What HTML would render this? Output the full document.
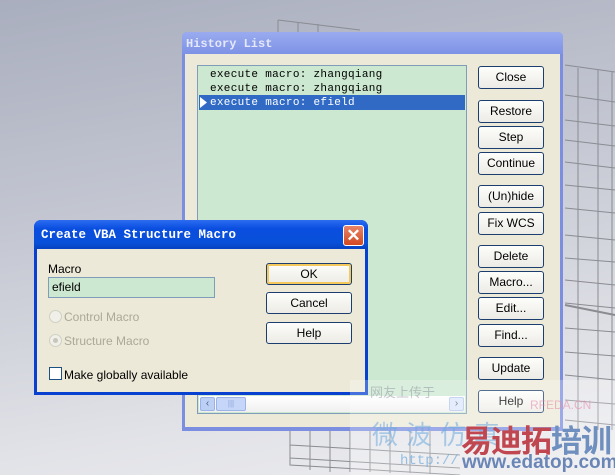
<!DOCTYPE html>
<html><head><style>
*{margin:0;padding:0;box-sizing:border-box}
body{width:615px;height:475px;overflow:hidden;position:relative;background:linear-gradient(170deg,#a9aebe 0%,#c4c7d2 40%,#e2e3e8 80%,#ececef 100%);font-family:"Liberation Sans",sans-serif;font-size:12px}
.abs{position:absolute}
.btn{position:absolute;width:66px;height:23px;border:1px solid #1c3e6e;border-radius:3px;background:linear-gradient(#fdfdfb,#ecebe5);text-align:center;line-height:21px;font-size:12px;color:#000}
.mono{font-family:"Liberation Mono",monospace;font-size:11px;letter-spacing:.3px}
</style></head><body>
<svg class="abs" style="left:0;top:0" width="615" height="475">
<g stroke="#8a8c92" stroke-width="1" fill="none">
<path d="M278 20 L360 30 M278 20 V32 M298 22 V32 M318 24 V32 M565 65 L615 72 M565 95 L615 102 M565 120 L615 126 M565 140 L615 146 M565 162 L615 168 M565 185 L615 190 M565 208 L615 213 M565 235 L615 240 M565 258 L615 262 M565 280 L615 285 M565 303 L615 308 M565 328 L615 332 M565 352 L615 356 M565 375 L615 380 M565 400 L615 404 M565 420 L615 425"/>
<path d="M578 68 V430 M598 70 V430 M612 72 V430"/>
<path d="M290 430 V465 L460 475 M310 430 V470 M330 430 V472 M350 430 V472 M370 430 V472 M390 430 V473 M410 430 V473 M430 430 V474 M290 445 L460 455 M290 458 L460 468"/>
<path d="M565 305 L615 315" stroke-width="2"/>
</g></svg>

<div class="abs" style="left:182px;top:32px;width:381px;height:399px;background:#7b8ee0;border-radius:5px 5px 0 0"></div>
<div class="abs" style="left:182px;top:32px;width:381px;height:22px;background:linear-gradient(#9aabef,#7e92e6);border-radius:5px 5px 0 0"></div>
<div class="abs" style="left:186px;top:37px;color:#e4e8f8;font-weight:bold;font-family:'Liberation Mono',monospace;font-size:12px">History List</div>
<div class="abs" style="left:185px;top:54px;width:375px;height:373px;background:#ece9d8"></div>
<div class="abs" style="left:197px;top:65px;width:270px;height:349px;background:#cce8d0;border:1px solid #7f9db9"></div>
<div class="abs mono" style="left:210px;top:69px;color:#000">execute macro: zhangqiang</div>
<div class="abs mono" style="left:210px;top:83px;color:#000">execute macro: zhangqiang</div>
<div class="abs" style="left:199px;top:95px;width:266px;height:15px;background:#316ac5"></div>
<svg class="abs" style="left:200px;top:97px" width="8" height="11"><path d="M0 0 L7 5.5 L0 11Z" fill="#fff"/></svg>
<div class="abs mono" style="left:210px;top:97px;color:#fff">execute macro: efield</div>
<div class="abs" style="left:199px;top:396px;width:266px;height:16px;background:linear-gradient(#fff,#f0f0f0)"></div>
<div class="abs" style="left:200px;top:397px;width:15px;height:14px;background:#bcd0f6;border:1px solid #9bb3e6;border-radius:2px;color:#4d6185;font-size:10px;text-align:center;line-height:12px">‹</div>
<div class="abs" style="left:216px;top:397px;width:30px;height:14px;background:#c6d6f8;border:1px solid #9bb3e6;border-radius:2px;color:#8ea4d6;font-size:8px;text-align:center;line-height:12px">|||</div>
<div class="abs" style="left:449px;top:397px;width:15px;height:14px;background:#dce6fa;border:1px solid #b5c6ee;border-radius:2px;color:#4d6185;font-size:10px;text-align:center;line-height:12px">›</div>

<div class="btn" style="left:478px;top:66px">Close</div>
<div class="btn" style="left:478px;top:100px">Restore</div>
<div class="btn" style="left:478px;top:126px">Step</div>
<div class="btn" style="left:478px;top:152px">Continue</div>
<div class="btn" style="left:478px;top:185px">(Un)hide</div>
<div class="btn" style="left:478px;top:212px">Fix WCS</div>
<div class="btn" style="left:478px;top:245px">Delete</div>
<div class="btn" style="left:478px;top:271px">Macro...</div>
<div class="btn" style="left:478px;top:297px">Edit...</div>
<div class="btn" style="left:478px;top:324px">Find...</div>
<div class="btn" style="left:478px;top:357px">Update</div>
<div class="btn" style="left:478px;top:390px">Help</div>

<div class="abs" style="left:34px;top:220px;width:334px;height:175px;background:#0841d0;border-radius:7px 7px 0 0"></div>
<div class="abs" style="left:34px;top:220px;width:334px;height:29px;background:linear-gradient(#2c6cf0,#0a4ee0 30%,#0850d8 80%,#0640c0);border-radius:7px 7px 0 0"></div>
<div class="abs" style="left:41px;top:228px;color:#fff;font-weight:bold;font-family:'Liberation Mono',monospace;font-size:12.5px">Create VBA Structure Macro</div>
<div class="abs" style="left:343px;top:225px;width:21px;height:21px;background:linear-gradient(#e8846a,#d24820);border:1px solid #fff;border-radius:3px;color:#fff;text-align:center;line-height:19px;font-size:17px;font-weight:bold">✕</div>
<div class="abs" style="left:37px;top:249px;width:328px;height:143px;background:#ece9d8"></div>
<div class="abs" style="left:48px;top:262px;font-size:12px">Macro</div>
<div class="abs" style="left:48px;top:277px;width:167px;height:21px;background:#cce8d0;border:1px solid #7f9db9;padding-left:3px;line-height:19px">efield</div>
<div class="abs" style="left:49px;top:310px;width:13px;height:13px;border:1px solid #d0cfc4;border-radius:50%;background:#f0efe8"></div>
<div class="abs" style="left:64px;top:310px;color:#aca899">Control Macro</div>
<div class="abs" style="left:49px;top:334px;width:13px;height:13px;border:1px solid #d0cfc4;border-radius:50%;background:#f0efe8"></div>
<div class="abs" style="left:53px;top:338px;width:5px;height:5px;border-radius:50%;background:#c8c6bb"></div>
<div class="abs" style="left:64px;top:334px;color:#aca899">Structure Macro</div>
<div class="abs" style="left:49px;top:367px;width:13px;height:13px;border:1px solid #1c5180;background:#fff"></div>
<div class="abs" style="left:64px;top:368px">Make globally available</div>
<div class="btn" style="left:266px;top:263px;width:86px;height:22px;border-color:#1c3e6e;box-shadow:inset 0 0 0 2px #f5c85c">OK</div>
<div class="btn" style="left:266px;top:292px;width:86px;height:22px">Cancel</div>
<div class="btn" style="left:266px;top:322px;width:86px;height:22px">Help</div>

<div class="abs" style="left:350px;top:380px;width:265px;height:95px;background:rgba(255,255,255,0.25)"></div>
<div class="abs" style="left:370px;top:382px;color:rgba(120,120,140,.4);font-family:'Noto Sans CJK SC',sans-serif;font-size:13px">网友上传于</div>
<div class="abs" style="left:530px;top:398px;color:rgba(230,140,170,.6);font-size:12px">RFEDA.CN</div>
<div class="abs" style="left:372px;top:415px;color:rgba(110,170,220,.55);font-family:'Noto Sans CJK SC',sans-serif;font-size:26px;letter-spacing:8px">微波仿真</div>
<div class="abs" style="left:461px;top:422px;color:#c04650;font-family:'Noto Sans CJK SC',sans-serif;font-weight:bold;font-size:31px;line-height:34px;letter-spacing:-1px">易迪拓<span style="color:#6f8fbf">培训</span></div>
<div class="abs" style="left:400px;top:453px;color:rgba(110,170,220,.7);font-family:'Liberation Mono',monospace;font-size:14px">http://</div>
<div class="abs" style="left:462px;top:452px;color:#6a86b6;font-weight:bold;font-size:19px">www.edatop.com</div>
</body></html>
